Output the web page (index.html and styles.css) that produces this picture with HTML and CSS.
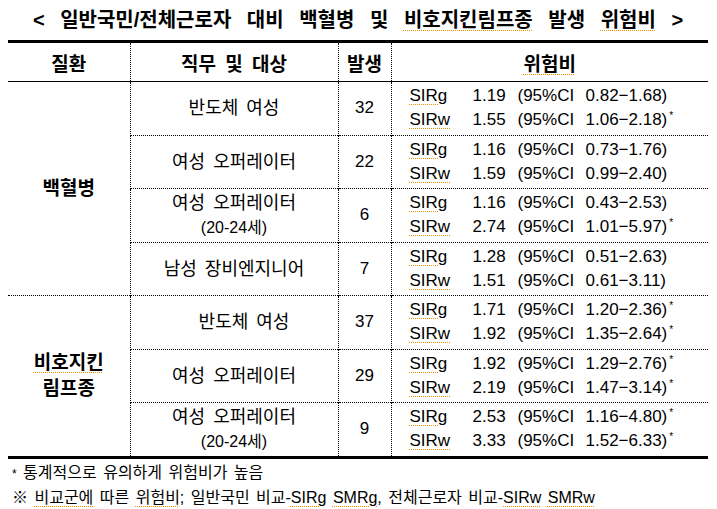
FILE: index.html
```html
<!DOCTYPE html>
<html lang="ko">
<head>
<meta charset="utf-8">
<link rel="stylesheet" href="styles.css">
</head>
<body>
<div class="page">
  <h1 class="title">&lt; 일반국민/전체근로자 대비 백혈병 및 <span class="sp">비호지킨림프종</span> 발생 <span class="sp">위험비</span> &gt;</h1>
  <table class="tbl">
    <colgroup>
      <col class="c1"><col class="c2"><col class="c3"><col class="c4">
    </colgroup>
    <thead>
      <tr>
        <th>질환</th>
        <th>직무 및 대상</th>
        <th>발생</th>
        <th><span class="sp">위험비</span></th>
      </tr>
    </thead>
    <tbody>
      <tr>
        <td rowspan="4" class="dis">백혈병</td>
        <td class="job">반도체 여성</td>
        <td class="num">32</td>
        <td class="risk">
          <div class="rl"><span class="lab sp">SIRg</span><span class="val">1.19</span><span class="ci">(95%CI</span><span class="rng">0.82−1.68)</span></div>
          <div class="rl"><span class="lab sp">SIRw</span><span class="val">1.55</span><span class="ci">(95%CI</span><span class="rng">1.06−2.18)<sup>*</sup></span></div>
        </td>
      </tr>
      <tr>
        <td class="job">여성 오퍼레이터</td>
        <td class="num">22</td>
        <td class="risk">
          <div class="rl"><span class="lab sp">SIRg</span><span class="val">1.16</span><span class="ci">(95%CI</span><span class="rng">0.73−1.76)</span></div>
          <div class="rl"><span class="lab sp">SIRw</span><span class="val">1.59</span><span class="ci">(95%CI</span><span class="rng">0.99−2.40)</span></div>
        </td>
      </tr>
      <tr>
        <td class="job">여성 오퍼레이터<br><span class="age">(20-24세)</span></td>
        <td class="num">6</td>
        <td class="risk">
          <div class="rl"><span class="lab sp">SIRg</span><span class="val">1.16</span><span class="ci">(95%CI</span><span class="rng">0.43−2.53)</span></div>
          <div class="rl"><span class="lab sp">SIRw</span><span class="val">2.74</span><span class="ci">(95%CI</span><span class="rng">1.01−5.97)<sup>*</sup></span></div>
        </td>
      </tr>
      <tr>
        <td class="job">남성 장비엔지니어</td>
        <td class="num">7</td>
        <td class="risk">
          <div class="rl"><span class="lab sp">SIRg</span><span class="val">1.28</span><span class="ci">(95%CI</span><span class="rng">0.51−2.63)</span></div>
          <div class="rl"><span class="lab sp">SIRw</span><span class="val">1.51</span><span class="ci">(95%CI</span><span class="rng">0.61−3.11)</span></div>
        </td>
      </tr>
      <tr>
        <td rowspan="3" class="dis"><span class="sp">비호지킨</span><br>림프종</td>
        <td class="job shift">반도체 여성</td>
        <td class="num">37</td>
        <td class="risk">
          <div class="rl"><span class="lab sp">SIRg</span><span class="val">1.71</span><span class="ci">(95%CI</span><span class="rng">1.20−2.36)<sup>*</sup></span></div>
          <div class="rl"><span class="lab sp">SIRw</span><span class="val">1.92</span><span class="ci">(95%CI</span><span class="rng">1.35−2.64)<sup>*</sup></span></div>
        </td>
      </tr>
      <tr>
        <td class="job">여성 오퍼레이터</td>
        <td class="num">29</td>
        <td class="risk">
          <div class="rl"><span class="lab sp">SIRg</span><span class="val">1.92</span><span class="ci">(95%CI</span><span class="rng">1.29−2.76)<sup>*</sup></span></div>
          <div class="rl"><span class="lab sp">SIRw</span><span class="val">2.19</span><span class="ci">(95%CI</span><span class="rng">1.47−3.14)<sup>*</sup></span></div>
        </td>
      </tr>
      <tr>
        <td class="job">여성 오퍼레이터<br><span class="age">(20-24세)</span></td>
        <td class="num">9</td>
        <td class="risk">
          <div class="rl"><span class="lab sp">SIRg</span><span class="val">2.53</span><span class="ci">(95%CI</span><span class="rng">1.16−4.80)<sup>*</sup></span></div>
          <div class="rl"><span class="lab sp">SIRw</span><span class="val">3.33</span><span class="ci">(95%CI</span><span class="rng">1.52−6.33)<sup>*</sup></span></div>
        </td>
      </tr>
    </tbody>
  </table>
  <div class="notes">
    <p class="note"><span class="ast">*</span> 통계적으로 유의하게 위험비가 높음</p>
    <p class="note">※ <span class="sp">비교군에</span> 따른 <span class="sp">위험비</span>; 일반국민 비교-<span class="sp">SIRg</span> <span class="sp">SMRg</span>, 전체근로자 비교-<span class="sp">SIRw</span> <span class="sp">SMRw</span></p>
  </div>
</div>
</body>
</html>
```

FILE: styles.css
```css
html, body {
  margin: 0;
  padding: 0;
  background: #fff;
}
body {
  font-family: "Liberation Sans", "Noto Sans CJK KR", sans-serif;
  color: #000;
}
.page {
  width: 700px;
  padding: 0 9px 0 8px;
}
.title {
  margin: 0;
  height: 40px;
  line-height: 40px;
  font-size: 20px;
  font-weight: bold;
  text-align: center;
  word-spacing: 10px;
  white-space: nowrap;
}
.sp {
  text-decoration: underline dotted #f29000;
  text-decoration-thickness: 1px;
  text-underline-offset: 3px;
}
.tbl {
  width: 700px;
  border-collapse: collapse;
  table-layout: fixed;
  border-top: 3px solid #000;
  border-bottom: 3px solid #000;
}
.c1 { width: 122px; }
.c2 { width: 208px; }
.c3 { width: 53px; }
.c4 { width: 317px; }
.tbl th {
  height: 38px;
  padding: 0;
  font-size: 19px;
  font-weight: bold;
  word-spacing: 4px;
  border-bottom: 1px solid #000;
  border-left: 1px dotted #000;
  text-align: center;
}
.tbl th:first-child { border-left: none; }
.tbl td {
  padding: 0;
  font-size: 18px;
  text-align: center;
  border-left: 1px dotted #000;
  border-top: 1px dotted #000;
  height: 52.5px;
  line-height: 24px;
}
.tbl td.dis {
  border-left: none;
  font-weight: bold;
  font-size: 19px;
  line-height: 26px;
}
.tbl tbody tr:first-child td { border-top: none; }
.job { word-spacing: 3px; }
.job.shift { padding-left: 20px; }
.age { font-size: 16px; }
.tbl td.num {
  font-size: 17px;
}
.tbl td.risk {
  text-align: left;
  padding-left: 18px;
  font-size: 17px;
}
.rl {
  display: grid;
  grid-template-columns: 63px 45px 68px auto;
  height: 24px;
  line-height: 24px;
  white-space: nowrap;
}
.rl sup {
  font-size: 10px;
  line-height: 0;
  vertical-align: 6px;
  margin-left: 2px;
}
.notes {
  padding: 2px 0 0 4px;
}
.note {
  margin: 0;
  font-size: 16px;
  line-height: 24px;
  white-space: nowrap;
  word-spacing: 2px;
}
.ast {
  font-size: 12px;
}
```
